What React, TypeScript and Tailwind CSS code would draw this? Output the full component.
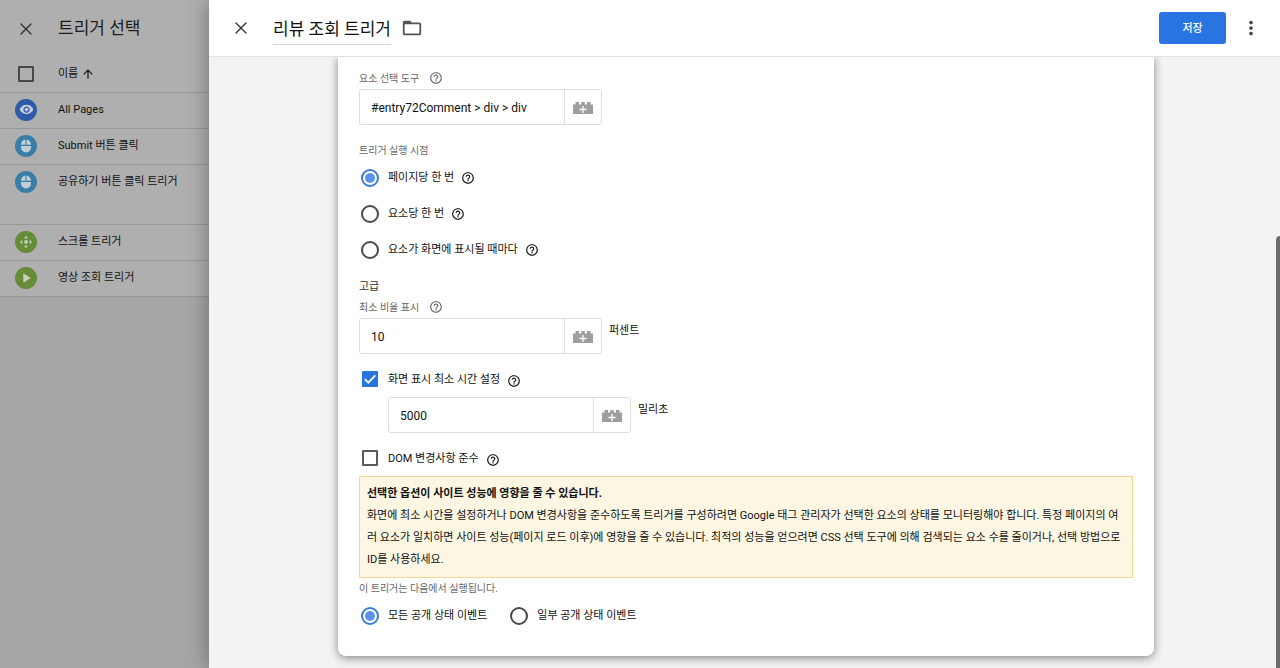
import { FC, ReactNode } from "react";
import { X } from "lucide-react";
import {
  MdArrowUpward,
  MdFolderOpen,
  MdHelpOutline,
  MdMoreVert,
  MdPlayArrow,
  MdVisibility,
} from "react-icons/md";

const MouseIcon: FC = () => (
  <svg viewBox="0 0 22 22" className="size-[22px]" fill="#c0cdd5" aria-hidden="true">
    <path d="M10.5 4.500v5.300H6c0-3 1.800-5 4.500-5.300zM11.500 4.500c2.700.300 4.500 2.300 4.500 5.300h-4.500zM6 10.900h10v1.600a5 5 0 0 1-10 0z" />
  </svg>
);

const ScrollIcon: FC = () => (
  <svg viewBox="0 0 22 22" className="size-[22px]" fill="#c6d0b8" aria-hidden="true">
    <circle cx="11" cy="11" r="1.900" />
    <path d="M11 5l2.200 2.300H8.800zM11 17l-2.200-2.300h4.400zM5 11l2.300-2.200v4.400zM17 11l-2.300 2.200V8.800z" />
  </svg>
);

const BrickIcon: FC = () => (
  <svg viewBox="0 0 20 12" className="mt-0.5 h-3 w-5" aria-hidden="true">
    <path d="M0 2.500h2.500V0h3.500v2.500h2.250V0h3.500v2.500H14V0h3.500v2.500H20V12H0z" fill="#9e9e9e" />
    <path d="M10 4v7M6.500 7.500h7" stroke="#fff" strokeWidth="1.300" />
  </svg>
);

const triggers = [
  {
    name: "All Pages",
    color: "bg-[#2f5aa8]",
    height: "h-9",
    icon: <MdVisibility className="size-[15px] text-[#c3cbdc]" />,
  },
  { name: "Submit 버튼 클릭", color: "bg-[#397da8]", height: "h-9", icon: <MouseIcon /> },
  { name: "공유하기 버튼 클릭 트리거", color: "bg-[#397da8]", height: "h-[60px]", icon: <MouseIcon /> },
  { name: "스크롤 트리거", color: "bg-[#668c38]", height: "h-9", icon: <ScrollIcon /> },
  {
    name: "영상 조회 트리거",
    color: "bg-[#668c38]",
    height: "h-9",
    icon: <MdPlayArrow className="size-4 text-[#c6d0b8]" />,
  },
];

const TriggerList: FC = () => (
  <aside className="w-[209px] shrink-0 bg-[#a5a6a8]">
    <div className="flex h-14 items-center gap-[22px] bg-[#afafaf] pt-0.5 pl-4">
      <button type="button" aria-label="닫기" className="text-[#333]">
        <X size={20} strokeWidth={1.6} />
      </button>
      <h2 className="text-[17px] text-[#1c1c1c]">트리거 선택</h2>
    </div>
    <table className="w-full border-collapse bg-[#afafaf] text-[11px] text-[#111]">
      <thead>
        <tr className="h-9 border-b border-[#979797]">
          <th className="w-[58px] p-0 pl-[18px] text-left">
            <input
              type="checkbox"
              aria-label="모두 선택"
              className="block size-4 appearance-none rounded-[1px] border-2 border-[#484848]"
            />
          </th>
          <th className="p-0 text-left font-normal">
            <span className="flex items-center gap-[3px]">
              이름 <MdArrowUpward className="size-3.5" />
            </span>
          </th>
        </tr>
      </thead>
      <tbody>
        {triggers.map((trigger) => (
          <tr key={trigger.name} className={`${trigger.height} border-b border-[#979797] align-top`}>
            <td className="p-0 pt-1.5 pl-[15px]">
              <span className={`flex size-[22px] items-center justify-center rounded-full ${trigger.color}`}>
                {trigger.icon}
              </span>
            </td>
            <td className="p-0 pt-1.5 leading-[22px]">{trigger.name}</td>
          </tr>
        ))}
      </tbody>
    </table>
  </aside>
);

const HelpButton: FC = () => (
  <button type="button" aria-label="도움말" className="shrink-0">
    <MdHelpOutline className="size-3.5" />
  </button>
);

const FieldLabel: FC<{ htmlFor?: string; help?: boolean; children: ReactNode }> = ({
  htmlFor,
  help,
  children,
}) => (
  <div className="flex h-5 items-center gap-2.5 text-[10px] text-[#666]">
    <label htmlFor={htmlFor}>{children}</label>
    {help && <HelpButton />}
  </div>
);

const VariableInput: FC<{ id: string; value: string; unit?: string; label?: string }> = ({
  id,
  value,
  unit,
  label,
}) => (
  <div className="flex gap-[7px]">
    <div className="flex h-9 w-[243px] rounded-[3px] border border-[#dcdfe1]">
      <input
        id={id}
        type="text"
        defaultValue={value}
        aria-label={label}
        className="min-w-0 flex-1 pt-px pl-[11px] text-[12px] text-[#111] outline-none"
      />
      <button
        type="button"
        aria-label="변수 선택"
        className="flex w-[37px] items-center justify-center border-l border-[#dcdfe1]"
      >
        <BrickIcon />
      </button>
    </div>
    {unit && <span className="pt-[5px] leading-4">{unit}</span>}
  </div>
);

const Radio: FC<{ name: string; checked?: boolean; help?: boolean; children: ReactNode }> = ({
  name,
  checked,
  help,
  children,
}) => (
  <div className="flex h-9 items-center gap-[7px]">
    <label className="flex items-center gap-[9px] pl-0.5">
      <input
        type="radio"
        name={name}
        defaultChecked={checked}
        className="flex size-[18px] appearance-none items-center justify-center rounded-full border-2 border-[#4a4a4a] before:hidden before:size-2.5 before:rounded-full before:bg-[#5b93ec] checked:border-[#3a7bd5] checked:before:block"
      />
      <span className="pt-px">{children}</span>
    </label>
    {help && <HelpButton />}
  </div>
);

const Checkbox: FC<{ checked?: boolean; children: ReactNode }> = ({ checked, children }) => (
  <div className="flex h-9 items-center gap-[7px]">
    <label className="flex items-center gap-2.5 pl-[3px]">
      <span className="grid size-4">
        <input
          type="checkbox"
          defaultChecked={checked}
          className="peer col-start-1 row-start-1 size-4 appearance-none rounded-[1px] border-2 border-[#5c5c5c] checked:border-[#2874e0] checked:bg-[#2874e0]"
        />
        <svg
          viewBox="0 0 16 16"
          className="pointer-events-none col-start-1 row-start-1 hidden size-4 peer-checked:block"
          fill="none"
          stroke="#fff"
          strokeWidth="1.800"
          aria-hidden="true"
        >
          <path d="M2.800 8.200l3.500 3.500 7-7.400" />
        </svg>
      </span>
      <span className="pt-[3px]">{children}</span>
    </label>
    <span className="flex pt-[3px]">
      <HelpButton />
    </span>
  </div>
);

const TriggerForm: FC = () => (
  <form className="mr-[126px] ml-[129px] rounded-b-lg bg-white px-[21px] pt-[11px] pb-[22px] shadow-[0_2px_10px_rgba(0,0,0,0.45)]">
    <FieldLabel htmlFor="selector" help>
      요소 선택 도구
    </FieldLabel>
    <div className="mt-px mb-[15px]">
      <VariableInput id="selector" value="#entry72Comment > div > div" />
    </div>

    <FieldLabel>트리거 실행 시점</FieldLabel>
    <Radio name="timing" checked help>
      페이지당 한 번
    </Radio>
    <Radio name="timing" help>
      요소당 한 번
    </Radio>
    <Radio name="timing" help>
      요소가 화면에 표시될 때마다
    </Radio>

    <h2 className="mt-2 h-5 leading-[22px] text-[#333]">고급</h2>
    <div className="mt-px mb-[7px] flex flex-col gap-px">
      <FieldLabel htmlFor="percent" help>
        최소 비율 표시
      </FieldLabel>
      <VariableInput id="percent" value="10" unit="퍼센트" />
    </div>

    <Checkbox checked>화면 표시 최소 시간 설정</Checkbox>
    <div className="mb-[7px] pl-[29px]">
      <VariableInput id="duration" value="5000" unit="밀리초" label="화면 표시 최소 시간" />
    </div>
    <Checkbox>DOM 변경사항 준수</Checkbox>

    <div className="border border-[#f3d894] bg-[#fdf6e3] px-[7px] py-1.5 leading-[22px]">
      <strong className="block font-bold">선택한 옵션이 사이트 성능에 영향을 줄 수 있습니다.</strong>
      <p>
        화면에 최소 시간을 설정하거나 DOM 변경사항을 준수하도록 트리거를 구성하려면 Google 태그 관리자가 선택한
        요소의 상태를 모니터링해야 합니다. 특정 페이지의 여러 요소가 일치하면 사이트 성능(페이지 로드 이후)에
        영향을 줄 수 있습니다. 최적의 성능을 얻으려면 CSS 선택 도구에 의해 검색되는 요소 수를 줄이거나, 선택
        방법으로 ID를 사용하세요.
      </p>
    </div>

    <FieldLabel>이 트리거는 다음에서 실행됩니다.</FieldLabel>
    <div className="flex gap-[21px]">
      <Radio name="scope" checked>
        모든 공개 상태 이벤트
      </Radio>
      <Radio name="scope">일부 공개 상태 이벤트</Radio>
    </div>
  </form>
);

export default function App() {
  return (
    <div className="flex h-screen overflow-hidden font-[Roboto,'Noto_Sans_CJK_KR',sans-serif] text-[11px] text-[#111]">
      <TriggerList />
      <main className="relative flex min-w-0 flex-1 flex-col bg-[#f1f3f4] shadow-[0_0_20px_rgba(0,0,0,0.38)]">
        <header className="relative z-10 flex h-[57px] shrink-0 items-center border-b border-[#e2e2e2] bg-white pr-[18px] pl-[22px]">
          <button type="button" aria-label="닫기" className="mr-[22px] text-[#333]">
            <X size={20} strokeWidth={1.6} />
          </button>
          <h1 className="h-[33px] border-b border-[#d5d5d5] text-[17px] leading-[34px]">리뷰 조회 트리거</h1>
          <button type="button" aria-label="폴더" className="ml-2.5 text-[#555]">
            <MdFolderOpen className="size-[22px]" />
          </button>
          <button
            type="button"
            className="mr-3.5 ml-auto h-8 w-[67px] rounded-[3px] bg-[#2874e0] pt-0.5 font-medium text-white"
          >
            저장
          </button>
          <button type="button" aria-label="더보기" className="text-[#444]">
            <MdMoreVert className="size-[22px]" />
          </button>
        </header>
        <div className="min-h-0 flex-1 overflow-hidden">
          <TriggerForm />
        </div>
        <div className="absolute right-0 bottom-0 h-[432px] w-1 rounded-tl-sm bg-[#6b6b6b]" />
      </main>
    </div>
  );
}
